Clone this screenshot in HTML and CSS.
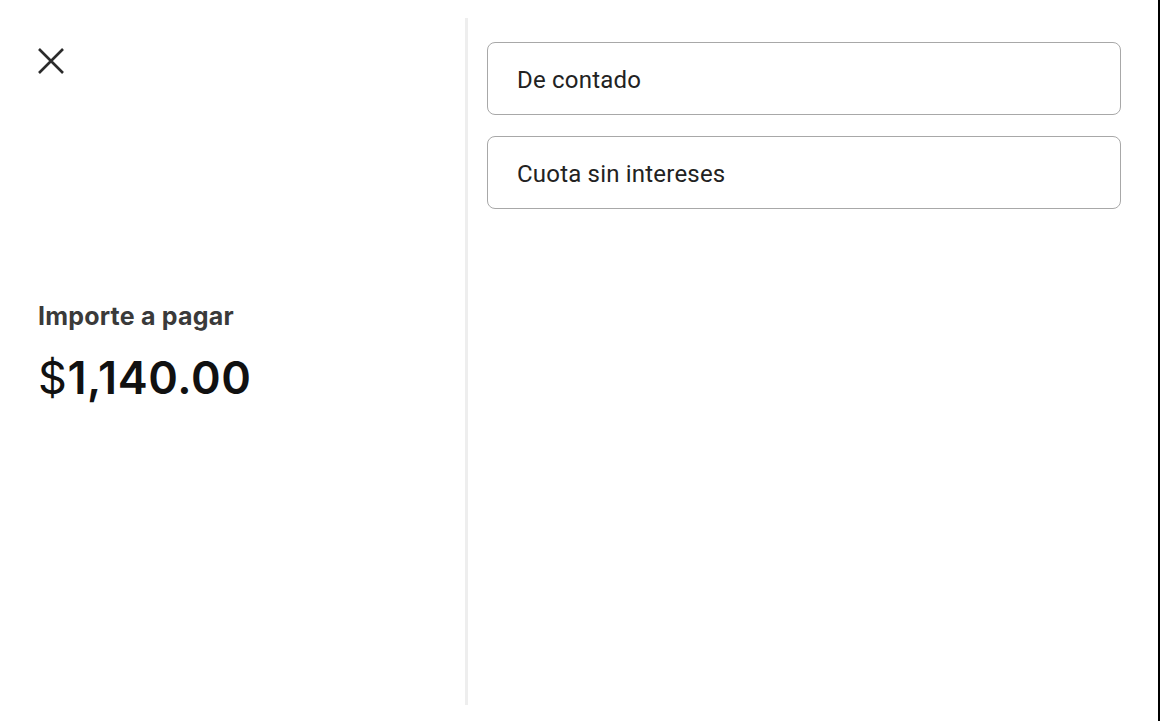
FILE: index.html
```html
<!DOCTYPE html>
<html lang="es">
<head>
  <meta charset="UTF-8">
  <meta name="viewport" content="width=device-width, initial-scale=1.0">
  <title>Importe a pagar</title>
  <link rel="stylesheet" href="styles.css">
</head>
<body>
  <div class="screen">
    <div class="summary">
      <button class="close" aria-label="Cerrar">
        <svg width="28" height="28" viewBox="0 0 28 28">
          <path d="M2 2 L26 26 M26 2 L2 26" stroke="#2b2b2b" stroke-width="2.6" fill="none"/>
        </svg>
      </button>
      <div class="amount-block">
        <div class="amount-label">Importe a pagar</div>
        <div class="amount"><span class="currency">$</span>1,140.00</div>
      </div>
    </div>

    <div class="options">
      <div class="option">De contado</div>
      <div class="option">Cuota sin intereses</div>
    </div>
  </div>
</body>
</html>
```

FILE: styles.css
```css
body {
  margin: 0;
  background: #fff;
  font-family: Roboto, sans-serif;
}
.screen {
  display: flex;
  height: 721px;
  border-right: 2px solid #000;
  box-sizing: border-box;
}
.summary {
  width: 465px;
  padding: 47px 0 0 37px;
  box-sizing: border-box;
}
.close {
  border: none;
  background: none;
  padding: 0;
  display: block;
  cursor: pointer;
}
.amount-block {
  margin-top: 223px;
  padding-left: 1px;
}
.amount-label {
  font-family: Inter, sans-serif;
  font-weight: 700;
  font-size: 25px;
  line-height: 30px;
  letter-spacing: 0.2px;
  color: #3a3a3a;
}
.amount {
  margin-top: 21px;
  font-family: Inter, sans-serif;
  font-weight: 600;
  font-size: 45px;
  line-height: 52px;
  letter-spacing: 0.6px;
  color: #111;
}
.amount .currency {
  font-weight: 400;
}
.options {
  flex: 1;
  margin: 18px 0 16px;
  border-left: 3px solid #eeeeee;
  padding: 24px 37px 0 19px;
  display: flex;
  flex-direction: column;
  gap: 21px;
}
.option {
  height: 73px;
  box-sizing: border-box;
  border: 1px solid #a8a8a8;
  border-radius: 8px;
  padding: 2px 29px 0;
  display: flex;
  align-items: center;
  font-size: 24px;
  letter-spacing: 0.2px;
  color: #222;
}
```
